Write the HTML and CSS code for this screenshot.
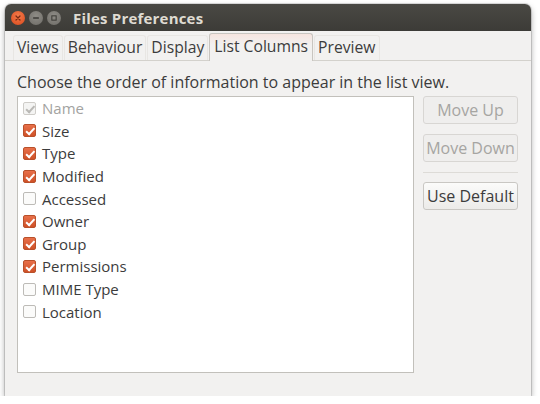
FILE: index.html
```html
<!DOCTYPE html>
<html>
<head>
<meta charset="utf-8">
<title>Files Preferences</title>
<link rel="stylesheet" href="styles.css">
</head>
<body>
<div class="window">
  <div class="titlebar">
    <div class="controls">
      <span class="ctl close"><svg viewBox="0 0 10 10" width="8" height="8"><path d="M2.5 2.5 L7.5 7.5 M7.5 2.5 L2.5 7.5" stroke="#7a2a12" stroke-width="1.6" stroke-linecap="round"/></svg></span>
      <span class="ctl"><svg viewBox="0 0 10 10" width="8" height="8"><path d="M2 5 H8" stroke="#3c3b37" stroke-width="1.6" stroke-linecap="round"/></svg></span>
      <span class="ctl"><svg viewBox="0 0 10 10" width="8" height="8"><rect x="2.3" y="2.3" width="5.4" height="5.4" fill="none" stroke="#3c3b37" stroke-width="1.3"/></svg></span>
    </div>
    <div class="title">Files Preferences</div>
  </div>

  <div class="tabs">
    <div class="tab">Views</div>
    <div class="tab">Behaviour</div>
    <div class="tab">Display</div>
    <div class="tab active">List Columns</div>
    <div class="tab">Preview</div>
  </div>

  <div class="page">
    <div class="hint">Choose the order of information to appear in the list view.</div>
    <div class="body">
      <div class="list">
        <div class="row disabled"><span class="box on"></span>Name</div>
        <div class="row"><span class="box on"></span>Size</div>
        <div class="row"><span class="box on"></span>Type</div>
        <div class="row"><span class="box on"></span>Modified</div>
        <div class="row"><span class="box"></span>Accessed</div>
        <div class="row"><span class="box on"></span>Owner</div>
        <div class="row"><span class="box on"></span>Group</div>
        <div class="row"><span class="box on"></span>Permissions</div>
        <div class="row"><span class="box"></span>MIME Type</div>
        <div class="row"><span class="box"></span>Location</div>
      </div>
      <div class="side">
        <button class="btn" disabled>Move Up</button>
        <button class="btn" disabled>Move Down</button>
        <div class="sep"></div>
        <button class="btn">Use Default</button>
      </div>
    </div>
  </div>
</div>
</body>
</html>
```
FILE: styles.css
```css
* { box-sizing: border-box; }

body {
  margin: 0;
  background: #ffffff;
  font-family: "Open Sans", "DejaVu Sans", sans-serif;
  color: #3c3c3c;
}

.window {
  margin: 4px 0 0 5px;
  width: 526px;
  height: 392px;
  background: #f2f1f0;
  border-radius: 6px 6px 0 0;
  box-shadow: 0 3px 6px rgba(0, 0, 0, 0.35), 0 0 0 1px rgba(0, 0, 0, 0.12);
  display: flex;
  flex-direction: column;
  overflow: hidden;
}

.titlebar {
  height: 27px;
  background: linear-gradient(#4a4944, #3c3b37);
  display: flex;
  align-items: center;
  padding-left: 6px;
}

.controls {
  display: flex;
  gap: 4px;
}

.ctl {
  width: 14px;
  height: 14px;
  border-radius: 50%;
  background: radial-gradient(circle at 50% 35%, #8e8c86, #6e6c67);
  display: flex;
  align-items: center;
  justify-content: center;
}

.ctl.close {
  background: radial-gradient(circle at 50% 35%, #f37b4b, #d9491c);
}

.title {
  margin-left: 12px;
  color: #dfdbd2;
  font-weight: bold;
  font-size: 15px;
  letter-spacing: 0.2px;
}

.tabs {
  display: flex;
  align-items: flex-end;
  padding: 2px 0 0 8px;
  height: 30px;
  border-bottom: 1px solid #d3d1cc;
}

.tab {
  font-size: 15.7px;
  padding: 0 3px 3px;
  margin-right: 1px;
  height: 25px;
  line-height: 22px;
  border: 1px solid #e8e6e3;
  border-bottom: none;
  border-radius: 3px 3px 0 0;
  background: #f2f1f0;
}

.tab.active {
  height: 28px;
  line-height: 25px;
  padding: 0 4px 3px;
  border-color: #c8c5c0;
  background: linear-gradient(#f6e4df, #f2f1f0 40%);
  margin-bottom: -1px;
}

.page {
  flex: 1;
  padding: 8px 13px 23px 12px;
  display: flex;
  flex-direction: column;
}

.hint {
  font-size: 16px;
  height: 26px;
  line-height: 26px;
}

.body {
  flex: 1;
  display: flex;
  gap: 9px;
  margin-top: 1px;
}

.list {
  width: 397px;
  background: #ffffff;
  border: 1px solid #c2c0bb;
  padding: 0 0 0 5px;
}

.row {
  display: flex;
  align-items: center;
  height: 22.6px;
  font-size: 15px;
}

.row.disabled {
  color: #a3a3a1;
}

.box {
  width: 13px;
  height: 13px;
  margin-right: 6px;
  border: 1px solid #bdbbb7;
  border-radius: 2px;
  background: #fbfbfa;
  position: relative;
  flex: none;
}

.box.on {
  border-color: #b9502a;
  background: linear-gradient(#e8704a, #cf5127);
}

.box.on::after {
  content: "";
  position: absolute;
  left: 3.5px;
  top: 1px;
  width: 3px;
  height: 6.5px;
  border: solid #ffffff;
  border-width: 0 2px 2px 0;
  transform: rotate(42deg);
}

.row.disabled .box.on {
  border-color: #cfcdc9;
  background: #f4f4f3;
}

.row.disabled .box.on::after {
  border-color: #b9b8b5;
}

.side {
  width: 95px;
  display: flex;
  flex-direction: column;
}

.btn {
  font-family: inherit;
  font-size: 16px;
  height: 28px;
  margin-bottom: 10px;
  border: 1px solid #c9c7c3;
  border-radius: 3px;
  background: linear-gradient(#fbfbfa, #ecebe9);
  color: #3c3c3c;
  padding: 0;
  white-space: nowrap;
}

.btn:disabled {
  color: #a6a5a2;
  background: #efeeed;
  border-color: #d8d6d3;
}

.sep {
  height: 1px;
  background: #dddbd7;
  margin: 0 0 9px;
}
```
